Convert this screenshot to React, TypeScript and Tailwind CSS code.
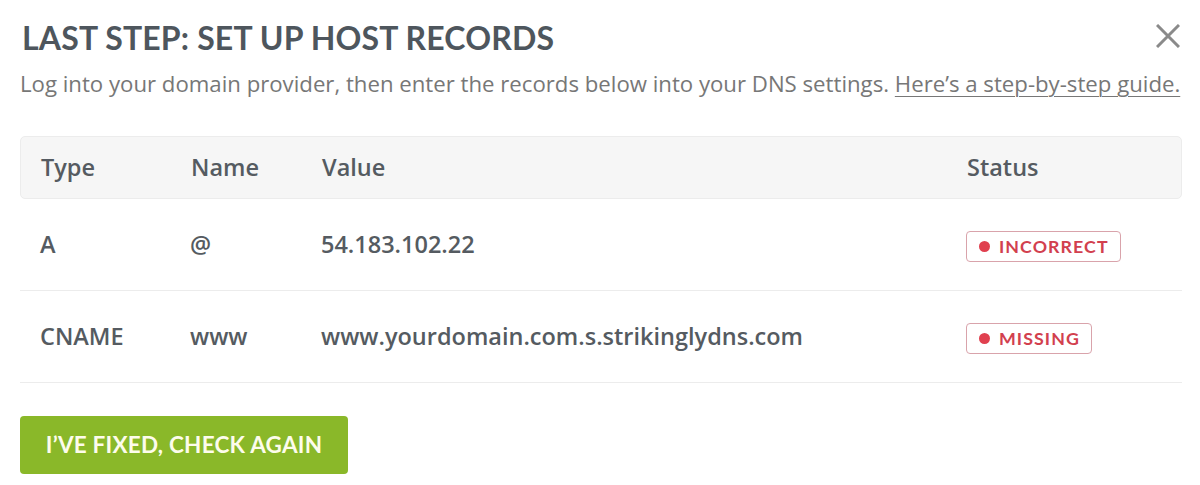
const rows = [
  { type: "A", name: "@", value: "54.183.102.22", status: "INCORRECT" },
  { type: "CNAME", name: "www", value: "www.yourdomain.com.s.strikinglydns.com", status: "MISSING" },
];

function StatusBadge({ label }: { label: string }) {
  return (
    <span className="inline-flex items-center gap-[9px] h-[31px] pl-[12px] pr-[11px] rounded-[4px] border border-[#d9a3ab] text-[#d2404e] font-['Lato'] font-bold text-[17.8px] tracking-[0.06em]">
      <span className="w-[11px] h-[11px] rounded-full bg-[#e0404f]" />
      {label}
    </span>
  );
}

export default function App() {
  return (
    <div className="w-[1200px] h-[485px] bg-white font-['Open_Sans',sans-serif] overflow-hidden">
      <div className="px-[20px] pt-[18px]">
        <div className="flex items-start justify-between">
          <h1 className="pl-[2px] font-['Lato',sans-serif] font-bold text-[32px] leading-[40px] text-[#4e565d] tracking-[0.005em]">
            LAST STEP: SET UP HOST RECORDS
          </h1>
          <button className="mt-[6px] text-[#8a8a8a]">
            <svg width="24" height="24" viewBox="0 0 24 24" fill="none" stroke="currentColor" strokeWidth="3">
              <path d="M1 1L23 23M23 1L1 23" />
            </svg>
          </button>
        </div>
        <p className="mt-[10px] whitespace-nowrap text-[22.2px] leading-[32px] text-[#777]">
          Log into your domain provider, then enter the records below into your DNS settings.{" "}
          <a className="underline underline-offset-[4px] decoration-[1px]">Here’s a step-by-step guide.</a>
        </p>

        <div className="mt-[36px] w-[1162px]">
          <div className="flex items-center h-[63px] bg-[#f6f6f6] border border-[#ececec] rounded-[5px] text-[23.5px] font-semibold text-[#555b61]">
            <div className="w-[170px] pl-[20px]">Type</div>
            <div className="w-[131px]">Name</div>
            <div className="w-[645px]">Value</div>
            <div>Status</div>
          </div>
          {rows.map((r) => (
            <div key={r.type} className="flex items-center h-[92px] border-b border-[#ececec] text-[23.5px] font-semibold text-[#555b61]">
              <div className="w-[170px] pl-[20px]">{r.type}</div>
              <div className="w-[131px]">{r.name}</div>
              <div className="w-[645px]">{r.value}</div>
              <div className="-mt-[2px]">
                <StatusBadge label={r.status} />
              </div>
            </div>
          ))}
        </div>

        <button className="mt-[33px] w-[328px] h-[58px] rounded-[4px] bg-[#8ab829] text-[#fdfcec] font-['Lato',sans-serif] font-bold text-[22.5px] tracking-[0.01em]">
          I’VE FIXED, CHECK AGAIN
        </button>
      </div>
    </div>
  );
}
